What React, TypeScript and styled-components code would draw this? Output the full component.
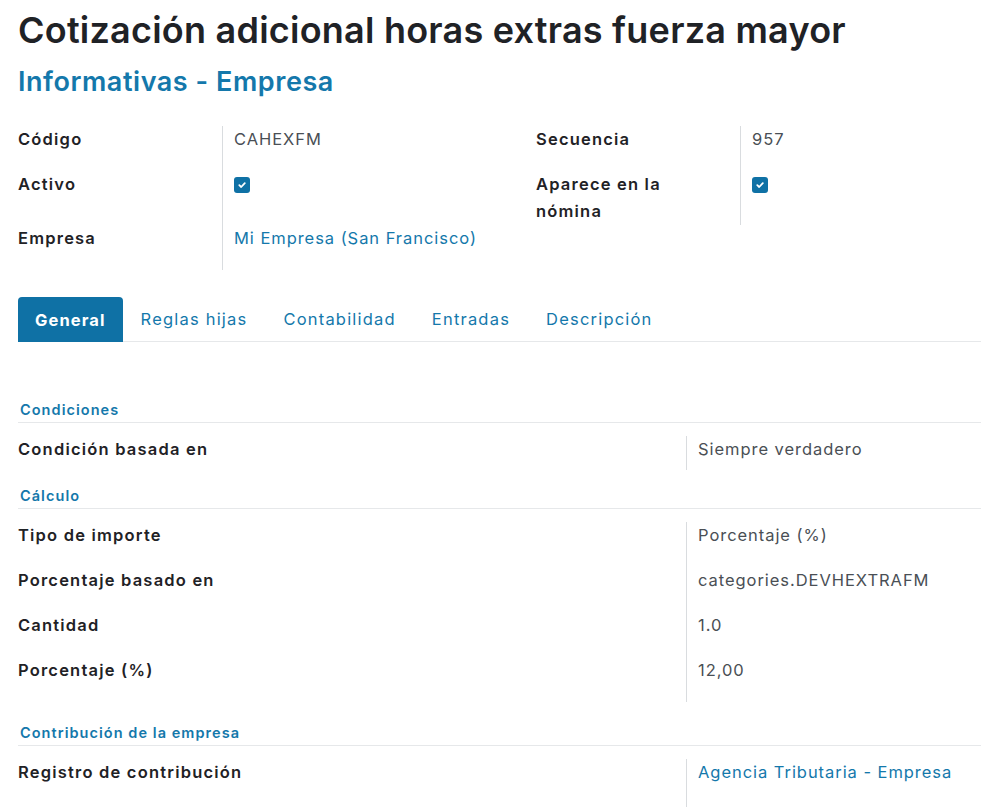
import React from "react";
import styled, { createGlobalStyle } from "styled-components";

const FONT = `Inter, "Open Sans", "Noto Sans", sans-serif`;
const BLUE = "#1478ab";
const TAB_BLUE = "#0f71a5";
const LINE = "#e6e8ea";
const SEP = "#d9dcdf";

const Global = createGlobalStyle`
  html, body { margin: 0; padding: 0; background: #ffffff; }
  body { font-family: ${FONT}; color: #212529; -webkit-font-smoothing: antialiased; }
  * { box-sizing: border-box; }
`;

const Sheet = styled.div`
  padding: 8px 0 0 18px;
  width: 981px;
  height: 807px;
  overflow: hidden;
`;

const Title = styled.h1`
  margin: 0;
  font-size: 36px;
  line-height: 44px;
  font-weight: 600;
  color: #1f2226;
  letter-spacing: 0.23px;
  white-space: nowrap;
`;

const Subtitle = styled.h2`
  margin: 13px 0 0;
  font-size: 27px;
  line-height: 34px;
  font-weight: 600;
  color: ${BLUE};
  letter-spacing: 0.55px;
`;

const TopGroups = styled.div`
  display: flex;
  margin-top: 27px;
`;

const Group = styled.div`
  width: 518px;
  flex-shrink: 0;
  display: grid;
  grid-template-columns: 204px 1fr;
  align-content: start;
`;

const Label = styled.div<{ $pb?: number }>`
  font-size: 16.5px;
  line-height: 27px;
  font-weight: 600;
  letter-spacing: 1.2px;
  color: #1f2226;
  padding-bottom: ${(p) => p.$pb ?? 18}px;
  padding-right: 12px;
`;

const Value = styled.div<{ $pb?: number; $link?: boolean }>`
  font-size: 16.5px;
  line-height: 27px;
  letter-spacing: 0.95px;
  color: ${(p) => (p.$link ? BLUE : "#4a4f55")};
  border-left: 1px solid ${SEP};
  padding-left: 11px;
  padding-bottom: ${(p) => p.$pb ?? 18}px;
  white-space: nowrap;
`;

const CheckWrap = styled.div`
  height: 27px;
  display: flex;
  align-items: center;
`;

const CheckBox = styled.span`
  width: 16px;
  height: 16px;
  border-radius: 3px;
  background: ${TAB_BLUE};
  display: inline-flex;
  align-items: center;
  justify-content: center;
`;

const Tabs = styled.div`
  display: flex;
  margin-top: 27px;
  border-bottom: 1px solid ${LINE};
  height: 45px;
`;

const Tab = styled.div<{ $active?: boolean }>`
  height: ${(p) => (p.$active ? 45 : 44)}px;
  padding: 0 ${(p) => (p.$active ? 17 : 18)}px;
  display: flex;
  align-items: center;
  font-size: 16.5px;
  letter-spacing: ${(p) => (p.$active ? 1.1 : 1.2)}px;
  font-weight: ${(p) => (p.$active ? 700 : 400)};
  color: ${(p) => (p.$active ? "#ffffff" : BLUE)};
  background: ${(p) => (p.$active ? TAB_BLUE : "transparent")};
  border-radius: 4px 4px 0 0;
  margin-bottom: -1px;
`;

const SectionHead = styled.div<{ $mt: number }>`
  margin-top: ${(p) => p.$mt}px;
  font-size: 14.5px;
  line-height: 20px;
  font-weight: 600;
  letter-spacing: 1.05px;
  color: ${BLUE};
  padding: 0 0 2px 2px;
  border-bottom: 1px solid ${LINE};
`;

const FieldGrid = styled.div`
  display: grid;
  grid-template-columns: 668px 1fr;
  margin-top: 13px;
`;

const Check = () => (
  <CheckWrap>
    <CheckBox>
      <svg width="10" height="10" viewBox="0 0 10 10">
        <path d="M2.3 5.2 L4.2 7 L7.8 3.2" fill="none" stroke="#fff" strokeWidth="1.8" strokeLinecap="round" strokeLinejoin="round" />
      </svg>
    </CheckBox>
  </CheckWrap>
);

export default function App() {
  return (
    <>
      <Global />
      <Sheet>
        <Title>Cotización adicional horas extras fuerza mayor</Title>
        <Subtitle>Informativas - Empresa</Subtitle>

        <TopGroups>
          <Group>
            <Label>Código</Label>
            <Value>CAHEXFM</Value>
            <Label $pb={27}>Activo</Label>
            <Value $pb={27}><Check /></Value>
            <Label $pb={18}>Empresa</Label>
            <Value $pb={18} $link>Mi Empresa (San Francisco)</Value>
          </Group>
          <Group>
            <Label>Secuencia</Label>
            <Value>957</Value>
            <Label $pb={0}>Aparece en la nómina</Label>
            <Value $pb={0}><Check /></Value>
          </Group>
        </TopGroups>

        <Tabs>
          <Tab $active>General</Tab>
          <Tab>Reglas hijas</Tab>
          <Tab>Contabilidad</Tab>
          <Tab>Entradas</Tab>
          <Tab>Descripción</Tab>
        </Tabs>

        <SectionHead $mt={58}>Condiciones</SectionHead>
        <FieldGrid>
          <Label $pb={7}>Condición basada en</Label>
          <Value $pb={7}>Siempre verdadero</Value>
        </FieldGrid>

        <SectionHead $mt={16}>Cálculo</SectionHead>
        <FieldGrid>
          <Label>Tipo de importe</Label>
          <Value>Porcentaje (%)</Value>
          <Label>Porcentaje basado en</Label>
          <Value>categories.DEVHEXTRAFM</Value>
          <Label>Cantidad</Label>
          <Value>1.0</Value>
          <Label>Porcentaje (%)</Label>
          <Value>12,00</Value>
        </FieldGrid>

        <SectionHead $mt={21}>Contribución de la empresa</SectionHead>
        <FieldGrid>
          <Label $pb={40}>Registro de contribución</Label>
          <Value $pb={40} $link>Agencia Tributaria - Empresa</Value>
        </FieldGrid>
      </Sheet>
    </>
  );
}
